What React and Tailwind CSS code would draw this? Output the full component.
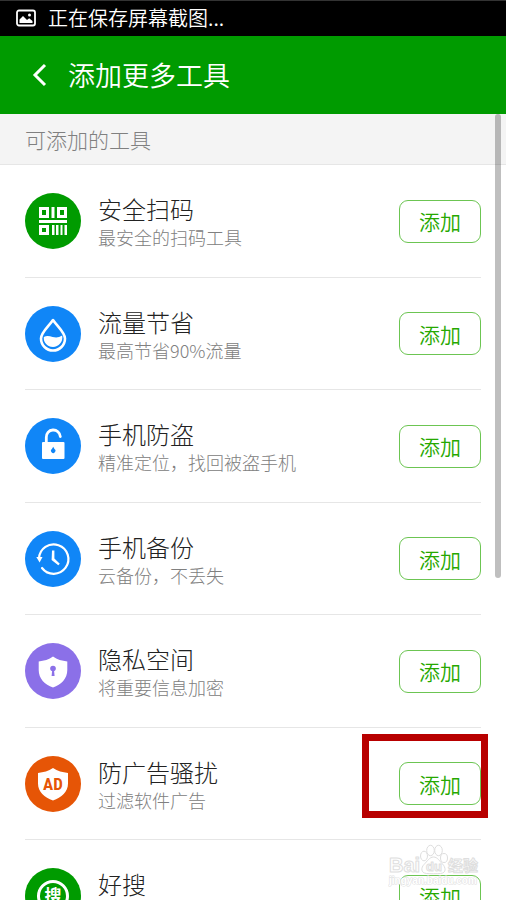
import React from "react";

const ScanIcon = () => (
  <svg viewBox="0 0 56 56" className="size-14" aria-hidden="true">
    <g fill="none" stroke="#fff" strokeWidth="3">
      <rect x="15.5" y="15.5" width="7" height="8" />
      <rect x="33.5" y="15.5" width="7" height="8" />
      <rect x="15.5" y="33.5" width="7" height="7" />
    </g>
    <path
      fill="#fff"
      d="M26.5 14h3v11h-3zM14 27h28v3H14zM27 32h2.5v10H27zM31 32h2.5v10H31zM35.5 32h2v10h-2zM39.5 32h2.5v10h-2.5z"
    />
  </svg>
);

const DropIcon = () => (
  <svg viewBox="0 0 56 56" className="size-14" aria-hidden="true">
    <path
      fill="none"
      stroke="#fff"
      strokeWidth="2.6"
      strokeLinejoin="round"
      d="M28 14C24 20 16 26.500 16 32.500a12 12 0 0 0 24 0C40 26.500 32 20 28 14z"
    />
    <path
      fill="#fff"
      d="M18.800 31c3.200-1.800 5.800-.8 8.800 0 3.200.8 6.200.8 9.600-1.400 1.200 6.400-3.700 11.400-9.200 11.400S18.200 36.500 18.800 31z"
    />
  </svg>
);

const LockIcon = () => (
  <svg viewBox="0 0 56 56" className="size-14" aria-hidden="true">
    <path
      fill="none"
      stroke="#fff"
      strokeWidth="2.8"
      strokeLinecap="round"
      d="M21.300 24v-4.500a7 7 0 0 1 14-1"
    />
    <rect x="17" y="24" width="22.500" height="17" rx="1" fill="#fff" />
    <path fill="#1086f7" d="M28.200 28.800l1.300 2.200a2.200 2.200 0 1 1-2.600 0z" />
  </svg>
);

const BackupIcon = () => (
  <svg viewBox="0 0 56 56" className="size-14" aria-hidden="true">
    <path
      fill="none"
      stroke="#fff"
      strokeWidth="2.200"
      strokeLinecap="round"
      d="M14 27.500A14.700 14.700 0 1 1 17 37"
    />
    <path fill="#fff" d="M11.300 26h6.200L14.600 31.500z" />
    <path fill="#fff" d="M27 19.500h2.400V27.500l5.400 5.200-1.500 1.500L26.600 29z" />
  </svg>
);

const PrivacyIcon = () => (
  <svg viewBox="0 0 56 56" className="size-14" aria-hidden="true">
    <path
      fill="#fff"
      d="M28 13.500c4 3.200 9 4.300 14.300 5v8.500c0 8.500-6 14.700-14.300 17.600C19.700 41.700 13.700 35.500 13.700 27v-8.500C19 17.800 24 16.700 28 13.500z"
    />
    <circle cx="28" cy="25.500" r="2.800" fill="#8b70e8" />
    <path fill="#8b70e8" d="M27.200 27h1.800l.6 6h-3z" />
  </svg>
);

const AdIcon = () => (
  <svg viewBox="0 0 56 56" className="size-14" aria-hidden="true">
    <path
      fill="#fff"
      d="M28 12c4.500 3.200 9.500 4.200 15 5v10.500c0 8.500-6.500 14-15 17-8.500-3-15-8.500-15-17V17c5.500-.8 10.500-1.800 15-5z"
    />
    <text
      x="28"
      y="34"
      textAnchor="middle"
      fontSize="17"
      fontWeight="700"
      fill="#e65506"
      className="font-['Roboto_Condensed',Roboto,sans-serif]"
    >
      AD
    </text>
  </svg>
);

const SearchIcon = () => (
  <svg viewBox="0 0 56 56" className="size-14" aria-hidden="true">
    <circle cx="28" cy="28" r="14.500" fill="none" stroke="#fff" strokeWidth="3" />
    <text x="28" y="34" textAnchor="middle" fontSize="17" fontWeight="700" fill="#fff">
      搜
    </text>
  </svg>
);

const tools = [
  { name: "安全扫码", desc: "最安全的扫码工具", color: "bg-[#009b00]", Icon: ScanIcon },
  { name: "流量节省", desc: "最高节省90%流量", color: "bg-[#1086f7]", Icon: DropIcon },
  { name: "手机防盗", desc: "精准定位，找回被盗手机", color: "bg-[#1086f7]", Icon: LockIcon },
  { name: "手机备份", desc: "云备份，不丢失", color: "bg-[#1086f7]", Icon: BackupIcon },
  { name: "隐私空间", desc: "将重要信息加密", color: "bg-[#8b70e8]", Icon: PrivacyIcon },
  { name: "防广告骚扰", desc: "过滤软件广告", color: "bg-[#e65506]", Icon: AdIcon, marked: true },
  { name: "好搜", color: "bg-[#009b00]", Icon: SearchIcon },
];

const ToolRow = ({ tool }) => {
  const { name, desc, color, Icon, marked } = tool;

  return (
    <li className="flex shrink-0 items-center border-b border-[#e6e6e6] odd:h-[113px] even:h-28">
      <span className={`size-14 shrink-0 overflow-hidden rounded-full ${color}`}>
        <Icon />
      </span>
      <div className="ml-[17px] h-14 min-w-0 flex-1">
        <h2 className="text-2xl leading-8 font-light text-[#222]">{name}</h2>
        {desc && <p className="text-lg leading-6 font-light text-[#808080]">{desc}</p>}
      </div>
      <div className="relative shrink-0">
        <button
          type="button"
          aria-label={`添加 ${name}`}
          className="block h-[43px] w-[82px] rounded-[9px] border border-[#6cc552] text-[21px] leading-6 font-[350] text-[#26a800]"
        >
          添加
        </button>
        {marked && (
          <div className="pointer-events-none absolute -top-7 -right-[7px] -bottom-[13px] -left-[37px] border-7 border-[#b80000]" />
        )}
      </div>
    </li>
  );
};

const Watermark = () => (
  <svg
    viewBox="0 0 94 44"
    className="pointer-events-none absolute right-6 bottom-3 h-11 w-[94px]"
    aria-hidden="true"
  >
    <g fill="#fff" stroke="#dedede" strokeWidth="1">
      <ellipse cx="36" cy="12" rx="3.500" ry="4.800" />
      <ellipse cx="42.500" cy="6.500" rx="3.800" ry="5.200" />
      <ellipse cx="50.500" cy="6.500" rx="3.800" ry="5.200" />
      <ellipse cx="56" cy="14" rx="3.500" ry="4.500" />
      <path d="M45.500 13c4 0 6 4 9 7s4.500 9-2 9.500c-4 .3-10 .3-14 0-6-.5-5.500-6-2.500-9s5.500-7.500 9.500-7.500z" />
    </g>
    <g
      fill="#fff"
      stroke="#dedede"
      strokeLinejoin="round"
      fontWeight="700"
      className="font-['Liberation_Sans','Noto_Sans_CJK_SC',sans-serif]"
    >
      <text x="1" y="28" fontSize="20">Bai</text>
      <text x="38" y="27" fontSize="13">du</text>
      <text x="60" y="27" fontSize="15">经验</text>
      <text x="1" y="40" fontSize="10" strokeWidth="1" paintOrder="stroke">
        jingyan.baidu.com
      </text>
    </g>
  </svg>
);

export default function App() {
  return (
    <div className="relative flex h-screen flex-col overflow-hidden bg-white font-['Noto_Sans_CJK_SC',sans-serif]">
      <div className="flex h-9 shrink-0 items-center gap-3 border-t border-[#333] bg-black pb-0.5 pl-4 text-white">
        <svg viewBox="0 0 20 18" className="h-[18px] w-5" aria-hidden="true">
          <rect x="1" y="1.500" width="18" height="15" rx="2" fill="none" stroke="#fff" strokeWidth="1.800" />
          <path fill="#fff" d="M3.500 14v-3.500L7 7l4 4 2.200-1.700L16.500 12v2z" />
          <circle cx="13.500" cy="6" r="1.500" fill="#fff" />
        </svg>
        <span className="text-xl leading-6 font-[350]">正在保存屏幕截图...</span>
      </div>

      <header className="flex h-[78px] shrink-0 items-center bg-[#009b00] pl-8 text-white">
        <button type="button" aria-label="返回" className="mr-5 block">
          <svg viewBox="0 0 16 24" className="h-6 w-4" aria-hidden="true">
            <path d="M13 2L3 12l10 10" fill="none" stroke="#fff" strokeWidth="3" />
          </svg>
        </button>
        <h1 className="text-[27px] leading-8 font-[350]">添加更多工具</h1>
      </header>

      <main className="relative flex min-h-0 flex-1 flex-col">
        <p className="flex h-[51px] shrink-0 items-center border-b border-[#e6e6e6] bg-[#f4f4f4] pl-[25px] text-[21px] leading-7 font-light text-[#808080]">
          可添加的工具
        </p>
        <ul className="flex min-h-0 flex-1 flex-col overflow-hidden px-[25px]">
          {tools.map((tool) => (
            <ToolRow key={tool.name} tool={tool} />
          ))}
        </ul>
        {/* scroll thumb */}
        <div className="absolute top-0 right-[5px] h-[59%] w-1.5 rounded-full bg-black/25" />
        <Watermark />
      </main>
    </div>
  );
}
